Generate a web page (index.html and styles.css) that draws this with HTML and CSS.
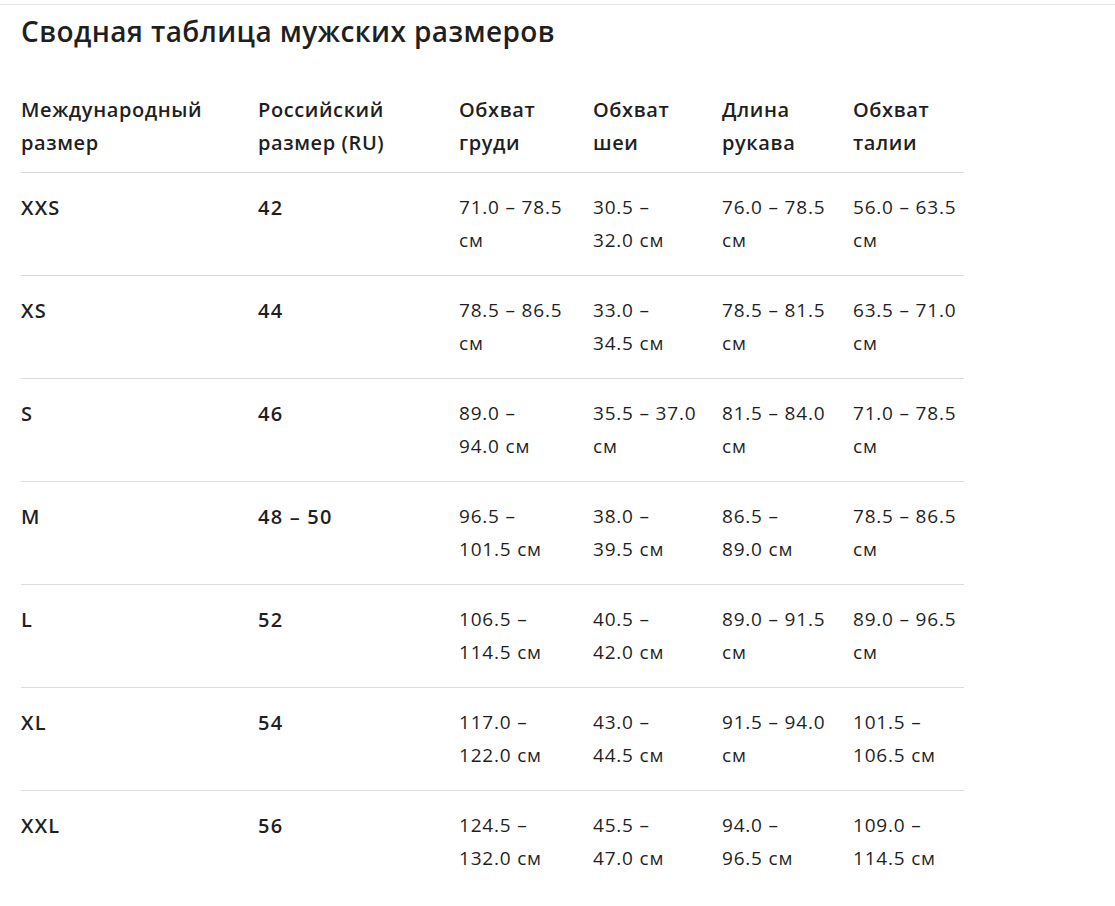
FILE: index.html
```html
<!DOCTYPE html>
<html lang="ru">
<head>
<meta charset="utf-8">
<title>Сводная таблица мужских размеров</title>
<link rel="stylesheet" href="styles.css">
</head>
<body>
<div class="topline"></div>
<h1 class="title">Сводная таблица мужских размеров</h1>
<table class="sizes">
  <colgroup>
    <col class="c1"><col class="c2"><col class="c3"><col class="c4"><col class="c5"><col class="c6">
  </colgroup>
  <thead>
    <tr>
      <th>Международный<br>размер</th>
      <th>Российский<br>размер (RU)</th>
      <th>Обхват<br>груди</th>
      <th>Обхват<br>шеи</th>
      <th>Длина<br>рукава</th>
      <th>Обхват<br>талии</th>
    </tr>
  </thead>
  <tbody>
    <tr>
      <td class="b">XXS</td><td class="b">42</td>
      <td>71.0 – 78.5<br>см</td><td>30.5 –<br>32.0 см</td><td>76.0 – 78.5<br>см</td><td>56.0 – 63.5<br>см</td>
    </tr>
    <tr>
      <td class="b">XS</td><td class="b">44</td>
      <td>78.5 – 86.5<br>см</td><td>33.0 –<br>34.5 см</td><td>78.5 – 81.5<br>см</td><td>63.5 – 71.0<br>см</td>
    </tr>
    <tr>
      <td class="b">S</td><td class="b">46</td>
      <td>89.0 –<br>94.0 см</td><td>35.5 – 37.0<br>см</td><td>81.5 – 84.0<br>см</td><td>71.0 – 78.5<br>см</td>
    </tr>
    <tr>
      <td class="b">M</td><td class="b">48 – 50</td>
      <td>96.5 –<br>101.5 см</td><td>38.0 –<br>39.5 см</td><td>86.5 –<br>89.0 см</td><td>78.5 – 86.5<br>см</td>
    </tr>
    <tr>
      <td class="b">L</td><td class="b">52</td>
      <td>106.5 –<br>114.5 см</td><td>40.5 –<br>42.0 см</td><td>89.0 – 91.5<br>см</td><td>89.0 – 96.5<br>см</td>
    </tr>
    <tr>
      <td class="b">XL</td><td class="b">54</td>
      <td>117.0 –<br>122.0 см</td><td>43.0 –<br>44.5 см</td><td>91.5 – 94.0<br>см</td><td>101.5 –<br>106.5 см</td>
    </tr>
    <tr>
      <td class="b">XXL</td><td class="b">56</td>
      <td>124.5 –<br>132.0 см</td><td>45.5 –<br>47.0 см</td><td>94.0 –<br>96.5 см</td><td>109.0 –<br>114.5 см</td>
    </tr>
  </tbody>
</table>
</body>
</html>
```

FILE: styles.css
```css
html, body {
  margin: 0;
  padding: 0;
  background: #ffffff;
}
body {
  font-family: "Open Sans", "Noto Sans", "Liberation Sans", sans-serif;
  color: #1f1f1f;
}
.topline {
  height: 4px;
  border-bottom: 1px solid #e3e3e3;
}
.title {
  margin: 8px 0 0 21px;
  font-size: 28px;
  line-height: 36px;
  font-weight: 600;
  letter-spacing: 0.4px;
  color: #1f1f1f;
}
.sizes {
  margin: 44px 0 0 21px;
  border-collapse: collapse;
  table-layout: fixed;
  width: 943px;
  font-size: 19px;
  line-height: 33px;
  letter-spacing: 0.8px;
}
.c1 { width: 237px; }
.c2 { width: 201px; }
.c3 { width: 134px; }
.c4 { width: 129px; }
.c5 { width: 131px; }
.c6 { width: 111px; }
.sizes th {
  text-align: left;
  font-size: 20px;
  font-weight: 600;
  letter-spacing: 0.6px;
  padding: 0 0 13px 0;
  vertical-align: top;
  border-bottom: 1px solid #dadce0;
  white-space: nowrap;
}
.sizes td {
  padding: 18px 0 18px 0;
  vertical-align: top;
  white-space: nowrap;
  border-bottom: 1px solid #dadce0;
}
.sizes tbody tr:last-child td {
  border-bottom: none;
}
.sizes td.b {
  font-size: 20px;
  font-weight: 600;
  letter-spacing: 1.2px;
}
```
